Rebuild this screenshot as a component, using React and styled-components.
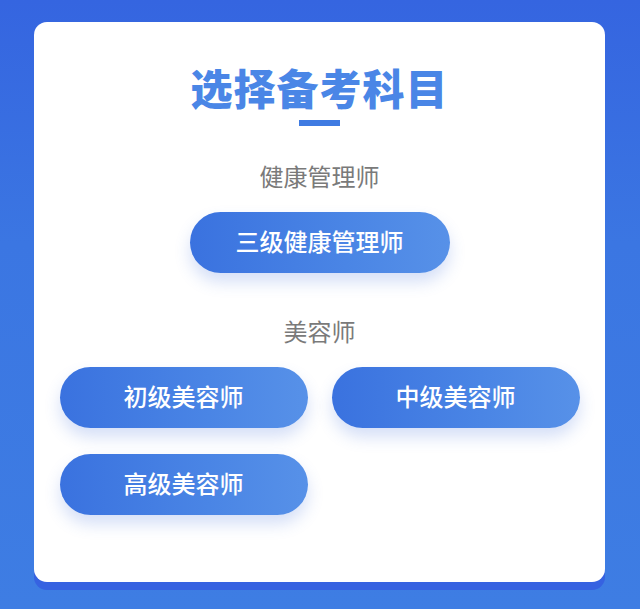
import React from "react";
import styled, { createGlobalStyle } from "styled-components";

const GlobalStyle = createGlobalStyle`
    html, body {
        margin: 0;
        padding: 0;
    }
    body {
        font-family: "Noto Sans CJK SC", "Noto Sans", sans-serif;
    }
`;

const Page = styled.div`
    width: 640px;
    height: 609px;
    box-sizing: border-box;
    padding: 22px 35px 0 34px;
    background: linear-gradient(180deg, #3565e0 0%, #3b76e2 40%, #3e7de3 100%);
    overflow: hidden;
`;

const Card = styled.div`
    height: 560px;
    box-sizing: border-box;
    padding-top: 44px;
    background: #ffffff;
    border-radius: 13px;
    box-shadow: 0 8px 0 #3662e1;
    display: flex;
    flex-direction: column;
    align-items: center;
`;

const Title = styled.h1`
    margin: 0;
    font-size: 42px;
    line-height: 42px;
    font-weight: 900;
    letter-spacing: 1px;
    color: #4a86e6;
`;

const TitleBar = styled.div`
    width: 41px;
    height: 6px;
    margin-top: 12px;
    background: #3f7be2;
`;

const GroupLabel = styled.div`
    margin-top: ${(p) => p.$top}px;
    font-size: 24px;
    line-height: 24px;
    color: #7a7a7a;
`;

const ButtonGrid = styled.div`
    margin-top: ${(p) => p.$top}px;
    display: grid;
    grid-template-columns: repeat(${(p) => p.$cols}, ${(p) => p.$width}px);
    column-gap: 24px;
    row-gap: 26px;
`;

const SubjectButton = styled.button`
    height: 61px;
    border: none;
    border-radius: 31px;
    background: linear-gradient(90deg, #3a72df 0%, #4a85e5 60%, #5791e8 100%);
    box-shadow: 0 9px 16px rgba(64, 110, 220, 0.22);
    color: #ffffff;
    font-family: inherit;
    font-size: 24px;
    font-weight: 500;
    cursor: pointer;
    padding: 0 0 5px;
`;

const groups = [
    { name: "健康管理师", cols: 1, width: 260, labelTop: 38, items: ["三级健康管理师"] },
    { name: "美容师", cols: 2, width: 248, labelTop: 46, items: ["初级美容师", "中级美容师", "高级美容师"] },
];

const App = () => {
    return (
        <Page>
            <GlobalStyle />
            <Card>
                <Title>选择备考科目</Title>
                <TitleBar />
                {groups.map((g) => (
                    <React.Fragment key={g.name}>
                        <GroupLabel $top={g.labelTop}>{g.name}</GroupLabel>
                        <ButtonGrid $top={24} $cols={g.cols} $width={g.width}>
                            {g.items.map((item) => (
                                <SubjectButton key={item}>{item}</SubjectButton>
                            ))}
                        </ButtonGrid>
                    </React.Fragment>
                ))}
            </Card>
        </Page>
    );
};

export default App;
